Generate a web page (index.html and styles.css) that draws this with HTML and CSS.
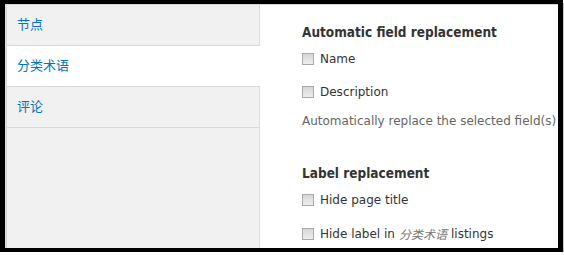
FILE: index.html
```html
<!DOCTYPE html>
<html lang="zh">
<head>
  <meta charset="UTF-8" />
  <title>分类术语 settings</title>
  <link rel="stylesheet" href="styles.css">
</head>
<body>
  <div class="frame">
    <div class="vertical-tabs">
      <ul class="tab-list">
        <li class="tab"><a href="#">节点</a></li>
        <li class="tab selected"><a href="#">分类术语</a></li>
        <li class="tab"><a href="#">评论</a></li>
      </ul>

      <div class="pane">
        <h3>Automatic field replacement</h3>
        <label class="check first"><input type="checkbox"> Name</label>
        <label class="check"><input type="checkbox"> Description</label>
        <div class="help">Automatically replace the selected field(s)</div>

        <h3 class="second">Label replacement</h3>
        <label class="check first"><input type="checkbox"> Hide page title</label>
        <label class="check last"><input type="checkbox"> Hide label in <em>分类术语</em> listings</label>
      </div>
    </div>
  </div>
</body>
</html>
```

FILE: styles.css
```css
body {
  margin: 0;
  background: #fff;
  font-family: "DejaVu Sans", "Noto Sans CJK SC", sans-serif;
  font-size: 12px;
  color: #333;
}

.frame {
  width: 553px;
  height: 244px;
  border: 5px solid #000;
  border-top-width: 4px;
  border-bottom-width: 4px;
  box-shadow: 1px 3px 0 #c4c4c4;
  overflow: hidden;
}

.vertical-tabs {
  display: flex;
  height: 100%;
  border-top: 1px solid #d4d4d4;
  border-left: 2px solid #dadada;
  box-sizing: border-box;
}

.tab-list {
  list-style: none;
  margin: 0;
  padding: 0;
  width: 252px;
  flex-shrink: 0;
  background: #f1f1f1;
  border-right: 1px solid #dcdcdc;
}

.tab {
  height: 40px;
  border-bottom: 1px solid #d8d8d8;
  display: flex;
  align-items: center;
  padding-left: 10px;
}

.tab a {
  color: #0074bd;
  text-decoration: none;
  font-family: "Noto Sans CJK SC", sans-serif;
  font-size: 13px;
  line-height: 1;
  margin-bottom: 4px;
}

.tab.selected {
  background: #fff;
  margin-right: -1px;
}

.pane {
  flex: 1;
  padding: 18px 0 0 42px;
  white-space: nowrap;
  overflow: hidden;
}

h3 {
  margin: 0;
  font-family: "DejaVu Sans Condensed", "DejaVu Sans", sans-serif;
  font-size: 13.5px;
  line-height: 18px;
  font-weight: bold;
  color: #333;
}

h3.second {
  margin-top: 34px;
}

.check {
  display: flex;
  align-items: center;
  line-height: 18px;
  margin-top: 15px;
}

.check.first {
  margin-top: 9px;
}

.check.last {
  margin-top: 16px;
}

.check input {
  appearance: none;
  width: 12px;
  height: 12px;
  margin: 0 6px 0 0;
  border: 1px solid #aaa;
  background: linear-gradient(#d6d6d6, #eee);
  box-sizing: border-box;
}

.check em {
  color: #777;
  font-family: "Noto Sans CJK SC", sans-serif;
  font-size: 12px;
  margin: 0 4px;
}

.help {
  margin-top: 11px;
  line-height: 18px;
  color: #666;
}
```
